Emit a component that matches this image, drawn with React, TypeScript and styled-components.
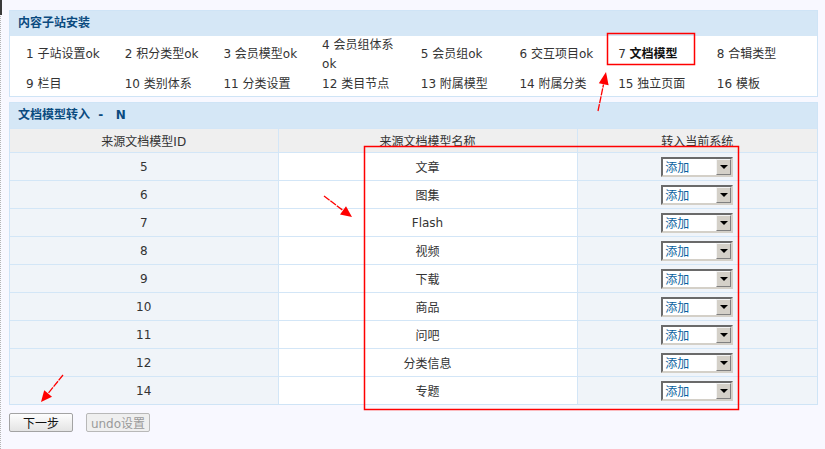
import React from "react";
import styled, { createGlobalStyle } from "styled-components";

const GlobalStyle = createGlobalStyle`
  html, body {
    margin: 0;
    padding: 0;
    background: #f8f8ff;
  }
  body {
    font-family: Verdana, "DejaVu Sans", "Noto Sans CJK SC", sans-serif;
    font-size: 12px;
    color: #333;
  }
`;

const steps = [
  { no: 1, name: "子站设置ok" },
  { no: 2, name: "积分类型ok" },
  { no: 3, name: "会员模型ok" },
  { no: 4, name: "会员组体系ok" },
  { no: 5, name: "会员组ok" },
  { no: 6, name: "交互项目ok" },
  { no: 7, name: "文档模型", active: true },
  { no: 8, name: "合辑类型" },
  { no: 9, name: "栏目" },
  { no: 10, name: "类别体系" },
  { no: 11, name: "分类设置" },
  { no: 12, name: "类目节点" },
  { no: 13, name: "附属模型" },
  { no: 14, name: "附属分类" },
  { no: 15, name: "独立页面" },
  { no: 16, name: "模板" },
];

const models = [
  { id: 5, name: "文章" },
  { id: 6, name: "图集" },
  { id: 7, name: "Flash" },
  { id: 8, name: "视频" },
  { id: 9, name: "下载" },
  { id: 10, name: "商品" },
  { id: 11, name: "问吧" },
  { id: 12, name: "分类信息" },
  { id: 14, name: "专题" },
];

export default function App() {
  return (
    <Page>
      <GlobalStyle />
      <Panel>
        <PanelHead>内容子站安装</PanelHead>
        <StepGrid>
          {steps.map((s) => (
            <Step key={s.no}>
              {s.active ? (
                <StepText>
                  {`${s.no}\u00a0`}
                  <b>{s.name}</b>
                </StepText>
              ) : (
                <StepText>{`${s.no}\u00a0${s.name}`}</StepText>
              )}
            </Step>
          ))}
        </StepGrid>
      </Panel>

      <Panel>
        <PanelHead>文档模型转入&nbsp; - &nbsp; N</PanelHead>
        <Grid>
          <colgroup>
            <col style={{ width: 268 }} />
            <col style={{ width: 299 }} />
            <col />
          </colgroup>
          <thead>
            <tr>
              <Th>来源文档模型ID</Th>
              <Th>来源文档模型名称</Th>
              <Th>转入当前系统</Th>
            </tr>
          </thead>
          <tbody>
            {models.map((m) => (
              <tr key={m.id}>
                <Td $shade>{m.id}</Td>
                <Td>{m.name}</Td>
                <Td $shade>
                  <FakeSelect>
                    <SelectValue>添加</SelectValue>
                    <SelectButton>
                      <Caret />
                    </SelectButton>
                  </FakeSelect>
                </Td>
              </tr>
            ))}
          </tbody>
        </Grid>
      </Panel>

      <Actions>
        <Button>下一步</Button>
        <Button disabled>undo设置</Button>
      </Actions>

      {/* pen marks drawn over the page */}
      <Marks width="825" height="449" viewBox="0 0 825 449">
        <g stroke="#ff0000" fill="none" strokeWidth="1.5">
          <rect x="607.5" y="33.5" width="87" height="31" />
          <rect x="364.5" y="146.5" width="374" height="263" />
        </g>
        <g stroke="#ff0000" strokeWidth="1.3" strokeDasharray="7 1">
          <line x1="598" y1="111" x2="603.5" y2="84.5" />
          <line x1="324" y1="196" x2="342.5" y2="210" />
          <line x1="63" y1="375" x2="48.5" y2="393" />
        </g>
        <g fill="#ff0000">
          <polygon points="606,72 608.6,85.2 598.8,83.2" />
          <polygon points="352,217 340,214.5 346,206.3" />
          <polygon points="41,402 52,396.8 44.2,390.3" />
        </g>
      </Marks>
    </Page>
  );
}

const Page = styled.div`
  position: relative;
  box-sizing: border-box;
  min-height: 449px;
  padding: 10px 7px 0 8px;
  border-left: 1px dotted #b4b4b4;

  &::before {
    content: "";
    position: absolute;
    left: -1px;
    top: 0;
    width: 2px;
    height: 15px;
    background: #3a3a3a;
  }
`;

const Panel = styled.div`
  border: 1px solid #cfe4f6;
  background: #fff;
  margin-bottom: 5px;
`;

const PanelHead = styled.div`
  height: 25px;
  line-height: 25px;
  padding-left: 8px;
  background: #d5e7f6;
  color: #0b4b7f;
  font-weight: bold;
  white-space: pre;
`;

const StepGrid = styled.div`
  display: grid;
  grid-template-columns: repeat(8, 98.7px);
  grid-template-rows: 37px 23px;
  padding-left: 8px;
`;

const Step = styled.div`
  display: flex;
  align-items: center;
  padding-left: 8px;
`;

const StepText = styled.span`
  width: 82px;
  line-height: 19px;
  color: #333;

  b {
    font-weight: bold;
    color: #111;
  }
`;

const Grid = styled.table`
  width: 100%;
  border-collapse: collapse;
  table-layout: fixed;
`;

const Th = styled.th`
  height: 23px;
  padding: 0;
  background: #efefef;
  font-weight: normal;
  color: #333;
  border-top: 1px solid #d3e6f7;
  border-bottom: 1px solid #d3e6f7;
  & + & {
    border-left: 1px solid #d3e6f7;
  }
`;

const Td = styled.td<{ $shade?: boolean }>`
  height: 27px;
  padding: 0;
  text-align: center;
  background: ${(p) => (p.$shade ? "#f0f4f9" : "#fff")};
  border-bottom: 1px solid #d3e6f7;
  & + & {
    border-left: 1px solid #d3e6f7;
  }
  tr:last-child > & {
    border-bottom: none;
  }
`;

const FakeSelect = styled.span`
  display: inline-flex;
  vertical-align: middle;
  box-sizing: border-box;
  width: 72px;
  height: 20px;
  border: 2px solid;
  border-color: #6a6a6a #d4d0c8 #d4d0c8 #6a6a6a;
  background: #fff;
  text-align: left;
`;

const SelectValue = styled.span`
  flex: 1;
  padding-left: 2px;
  line-height: 16px;
  color: #0a5f9e;
  font-family: "Noto Sans CJK SC", sans-serif;
`;

const SelectButton = styled.span`
  box-sizing: border-box;
  width: 15px;
  display: flex;
  align-items: center;
  justify-content: center;
  background: #d4d0c8;
  border: 1px solid;
  border-color: #f4f4f4 #808080 #808080 #f4f4f4;
`;

const Caret = styled.span`
  width: 0;
  height: 0;
  border-left: 4px solid transparent;
  border-right: 4px solid transparent;
  border-top: 4px solid #000;
`;

const Actions = styled.div`
  display: flex;
  gap: 13px;
  margin-top: 8px;
`;

const Button = styled.button`
  box-sizing: border-box;
  width: 64px;
  height: 19px;
  padding: 0;
  font: inherit;
  color: #111;
  background: linear-gradient(#fdfdfd, #e4e4e4);
  border: 1px solid #a3a3a3;
  border-radius: 2px;

  &:disabled {
    color: #9a9a9a;
    background: #efefef;
    border-color: #b8b8b8;
  }
`;

const Marks = styled.svg`
  position: absolute;
  left: -1px;
  top: 0;
  pointer-events: none;
`;
